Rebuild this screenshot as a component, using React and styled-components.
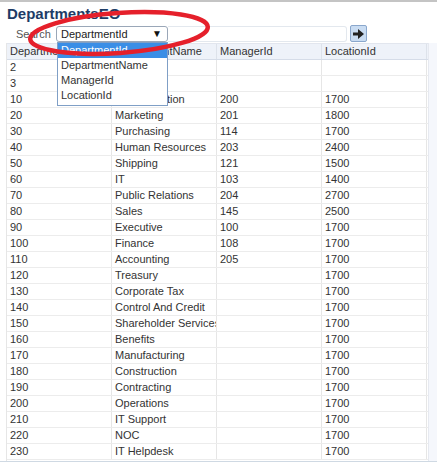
import React from 'react'
import styled, { createGlobalStyle } from 'styled-components'

const GlobalStyle = createGlobalStyle`
    body {
        margin: 0;
        background: #fff;
        font-family: "Liberation Sans", Tahoma, Arial, sans-serif;
    }
`

const rows = [
    ['2', '', '', ''],
    ['3', '', '', ''],
    ['10', 'Administration', '200', '1700'],
    ['20', 'Marketing', '201', '1800'],
    ['30', 'Purchasing', '114', '1700'],
    ['40', 'Human Resources', '203', '2400'],
    ['50', 'Shipping', '121', '1500'],
    ['60', 'IT', '103', '1400'],
    ['70', 'Public Relations', '204', '2700'],
    ['80', 'Sales', '145', '2500'],
    ['90', 'Executive', '100', '1700'],
    ['100', 'Finance', '108', '1700'],
    ['110', 'Accounting', '205', '1700'],
    ['120', 'Treasury', '', '1700'],
    ['130', 'Corporate Tax', '', '1700'],
    ['140', 'Control And Credit', '', '1700'],
    ['150', 'Shareholder Services', '', '1700'],
    ['160', 'Benefits', '', '1700'],
    ['170', 'Manufacturing', '', '1700'],
    ['180', 'Construction', '', '1700'],
    ['190', 'Contracting', '', '1700'],
    ['200', 'Operations', '', '1700'],
    ['210', 'IT Support', '', '1700'],
    ['220', 'NOC', '', '1700'],
    ['230', 'IT Helpdesk', '', '1700'],
]

const columns = ['DepartmentId', 'DepartmentName', 'ManagerId', 'LocationId']
const options = ['DepartmentId', 'DepartmentName', 'ManagerId', 'LocationId']

export default function App() {
    return (
        <Page>
            <GlobalStyle />
            <Title>DepartmentsEO</Title>
            <SearchRow>
                <Label>Search</Label>
                <Select>
                    <span>DepartmentId</span>
                    <Caret>▼</Caret>
                </Select>
                <SearchInput />
                <GoButton>
                    <svg width="11" height="10" viewBox="0 0 11 10">
                        <path d="M0 3.5h5V0l6 5-6 5V6.5H0z" fill="#222" />
                    </svg>
                </GoButton>
            </SearchRow>
            <Panel>
                <Grid>
                    <HeadRow>
                        {columns.map(c => <HeadCell key={c}>{c}</HeadCell>)}
                    </HeadRow>
                    {rows.map(r => (
                        <Row key={r[0]}>
                            {r.map((v, i) => <Cell key={i}>{v}</Cell>)}
                        </Row>
                    ))}
                </Grid>
                <Filler />
            </Panel>
            <DropList>
                {options.map((o, i) => <Option key={o} selected={i === 0}>{o}</Option>)}
            </DropList>
            <Ring width="190" height="50" viewBox="0 0 190 50">
                <ellipse cx="95" cy="25" rx="89" ry="20" fill="none" stroke="#e5202b" strokeWidth="4.5" transform="rotate(-4 95 25)" />
            </Ring>
        </Page>
    )
}

const Page = styled.div`
    position: relative;
    width: 437px;
    height: 473px;
    border-top: 2px solid #c4c4c4;
    box-sizing: border-box;
    overflow: hidden;
`

const Title = styled.div`
    font-size: 15px;
    font-weight: bold;
    color: #1d3c66;
    padding: 3px 0 0 7px;
    height: 19px;
`

const SearchRow = styled.div`
    display: flex;
    align-items: center;
    padding-left: 16px;
    height: 17px;
    margin-top: 1px;
`

const Label = styled.span`
    font-size: 11px;
    color: #555;
    width: 40px;
`

const Select = styled.div`
    display: flex;
    justify-content: space-between;
    align-items: center;
    box-sizing: border-box;
    width: 112px;
    height: 16px;
    border: 1px solid #9aa7b8;
    border-radius: 3px;
    padding: 0 5px 0 4px;
    font-size: 11px;
    color: #222;
`

const Caret = styled.span`
    font-size: 10px;
    color: #111;
`

const SearchInput = styled.div`
    width: 179px;
    height: 16px;
    box-sizing: border-box;
    border: 1px solid #e3e8ee;
    border-left: none;
    border-radius: 0 3px 3px 0;
`

const GoButton = styled.div`
    display: flex;
    align-items: center;
    justify-content: center;
    width: 17px;
    height: 17px;
    box-sizing: border-box;
    margin-left: 3px;
    background: #c9dcf2;
    border: 1px solid #8aa7cc;
    border-radius: 2px;
`

const Panel = styled.div`
    display: flex;
    margin-top: 1px;
    border-bottom: 1px solid #cfd9e3;
`

const Grid = styled.div`
    width: 421px;
    margin-left: 6px;
    border-left: 1px solid #e6e6e6;
    padding-bottom: 1px;
`

const HeadRow = styled.div`
    display: grid;
    grid-template-columns: repeat(4, 105px);
    background: #eef2f9;
    border-top: 1px solid #e2e6ee;
    border-bottom: 1px solid #d5dce8;
`

const HeadCell = styled.div`
    font-size: 11px;
    color: #333;
    height: 15px;
    line-height: 15px;
    padding-left: 3px;
    border-right: 1px solid #dde2ea;
    white-space: nowrap;
    overflow: hidden;
`

const Row = styled.div`
    display: grid;
    grid-template-columns: repeat(4, 105px);
    border-bottom: 1px solid #ececec;
`

const Cell = styled.div`
    font-size: 11px;
    color: #333;
    height: 15px;
    line-height: 15px;
    padding-left: 3px;
    border-right: 1px solid #e6e6e6;
    white-space: nowrap;
    overflow: hidden;
`

const Filler = styled.div`
    flex: 1;
    background: #f5f7fc;
    border-left: 1px solid #e6e9f0;
`

const DropList = styled.div`
    position: absolute;
    left: 57px;
    top: 40px;
    width: 111px;
    box-sizing: border-box;
    background: #fff;
    border: 1px solid #7f9fc6;
    padding-bottom: 2px;
`

const Option = styled.div`
    font-size: 11px;
    height: 15px;
    line-height: 15px;
    padding-left: 3px;
    color: ${p => p.selected ? '#fff' : '#333'};
    background: ${p => p.selected ? '#3a8ee6' : 'transparent'};
`

const Ring = styled.svg`
    position: absolute;
    left: 24px;
    top: 6px;
`
